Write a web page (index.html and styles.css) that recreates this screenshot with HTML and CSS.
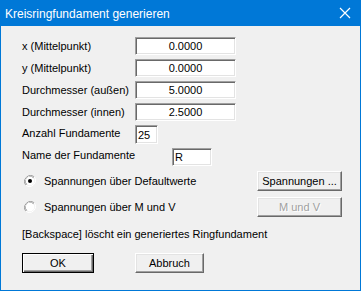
FILE: index.html
```html
<!DOCTYPE html>
<html lang="de">
<head>
    <meta charset="UTF-8">
    <title>Kreisringfundament generieren</title>
    <link rel="stylesheet" href="styles.css">
</head>
<body>
    <div class="window">
        <div class="titlebar">
            <span class="title">Kreisringfundament generieren</span>
            <svg class="close" width="12" height="12" viewBox="0 0 12 12">
                <path d="M1 1 L11 11 M11 1 L1 11" stroke="#fff" stroke-width="1.2" fill="none"/>
            </svg>
        </div>

        <div class="content">
            <div class="row">
                <label class="lbl">x (Mittelpunkt)</label>
                <input class="field num" type="text" value="0.0000" readonly>
            </div>
            <div class="row">
                <label class="lbl">y (Mittelpunkt)</label>
                <input class="field num" type="text" value="0.0000" readonly>
            </div>
            <div class="row">
                <label class="lbl">Durchmesser (außen)</label>
                <input class="field num" type="text" value="5.0000" readonly>
            </div>
            <div class="row">
                <label class="lbl">Durchmesser (innen)</label>
                <input class="field num" type="text" value="2.5000" readonly>
            </div>
            <div class="row row-count">
                <label class="lbl lbl-up">Anzahl Fundamente</label>
                <input class="field small" type="text" value="25" readonly>
            </div>
            <div class="row row-name">
                <label class="lbl lbl-up lbl-wide">Name der Fundamente</label>
                <input class="field name" type="text" value="R" readonly>
            </div>

            <div class="option first">
                <span class="radio">
                    <svg width="12" height="12" viewBox="0 0 12 12">
                        <path d="M10.2 1.8 A6 6 0 0 0 1.8 10.2" stroke="#a0a0a0" fill="none"/>
                        <path d="M9.4 2.6 A4.9 4.9 0 0 0 2.6 9.4" stroke="#696969" fill="none"/>
                        <circle cx="6" cy="6" r="4.4" fill="#fff"/>
                        <path d="M1.8 10.2 A6 6 0 0 0 10.2 1.8" stroke="#fff" fill="none"/>
                        <circle cx="6" cy="6" r="2" fill="#000"/>
                    </svg>
                </span>
                <span class="opt-text">Spannungen über Defaultwerte</span>
                <button class="btn side">Spannungen ...</button>
            </div>
            <div class="option">
                <span class="radio">
                    <svg width="12" height="12" viewBox="0 0 12 12">
                        <path d="M10.2 1.8 A6 6 0 0 0 1.8 10.2" stroke="#a0a0a0" fill="none"/>
                        <path d="M9.4 2.6 A4.9 4.9 0 0 0 2.6 9.4" stroke="#696969" fill="none"/>
                        <circle cx="6" cy="6" r="4.4" fill="#fff"/>
                        <path d="M1.8 10.2 A6 6 0 0 0 10.2 1.8" stroke="#fff" fill="none"/>
                    </svg>
                </span>
                <span class="opt-text">Spannungen über M und V</span>
                <button class="btn side" disabled>M und V</button>
            </div>

            <p class="hint">[Backspace] löscht ein generiertes Ringfundament</p>

            <div class="actions">
                <button class="btn default">OK</button>
                <button class="btn cancel">Abbruch</button>
            </div>
        </div>
    </div>
</body>
</html>
```

FILE: styles.css
```css
body {
    margin: 0;
    background: #fff;
    font-family: "Liberation Sans", Arial, sans-serif;
    font-size: 11px;
    color: #000;
}
.window {
    width: 361px;
    height: 291px;
    box-sizing: border-box;
    border: 1px solid #0078d7;
    border-top: 0;
    background: #f0f0f0;
}
.titlebar {
    height: 26px;
    background: #0078d7;
    display: flex;
    align-items: center;
    justify-content: space-between;
    padding: 0 9px 0 4px;
    color: #fff;
}
.title {
    font-size: 12px;
    padding-top: 1px;
}
.close {
    display: block;
}
.content {
    padding: 11px 18px 0 21px;
}
.row {
    display: flex;
    align-items: center;
    height: 18px;
    margin-bottom: 4px;
}
.row-count {
    margin-top: 2px;
    height: 19px;
}
.row-name {
    margin-bottom: 5px;
}
.lbl {
    width: 113px;
    flex-shrink: 0;
}
.lbl-up {
    position: relative;
    top: -2px;
}
.lbl-wide {
    width: 150px;
}
.field {
    box-sizing: border-box;
    height: 18px;
    margin: 0;
    padding: 0 2px;
    font-family: inherit;
    font-size: 11px;
    color: #000;
    background: #fff;
    border: 1px solid;
    border-color: #a0a0a0 #fff #fff #a0a0a0;
    box-shadow: inset 1px 1px 0 #696969, inset -1px -1px 0 #e3e3e3;
    outline: none;
}
.num {
    width: 101px;
    text-align: center;
}
.small {
    width: 23px;
    height: 19px;
}
.name {
    width: 40px;
}
.option {
    display: flex;
    align-items: center;
    height: 20px;
}
.option.first {
    margin-bottom: 6px;
}
.radio {
    width: 12px;
    height: 12px;
    margin: 0 8px 0 2px;
}
.radio svg {
    display: block;
}
.opt-text {
    flex: 1;
}
.btn {
    box-sizing: border-box;
    height: 20px;
    margin: 0;
    padding: 0;
    font-family: inherit;
    font-size: 11px;
    color: #000;
    background: #f0f0f0;
    border: 1px solid;
    border-color: #fff #696969 #696969 #fff;
    box-shadow: inset -1px -1px 0 #a0a0a0, inset 1px 1px 0 #e3e3e3;
}
.btn:disabled {
    color: #a0a0a0;
    text-shadow: 1px 1px 0 #fff;
}
.side {
    width: 85px;
}
.hint {
    margin: 5px 0 0;
    height: 24px;
    line-height: 24px;
}
.actions {
    display: flex;
    gap: 41px;
    margin-top: 7px;
}
.default {
    width: 72px;
    border: 1px solid #000;
    box-shadow: inset 1px 1px 0 #fff, inset -1px -1px 0 #696969, inset -2px -2px 0 #a0a0a0;
}
.cancel {
    width: 69px;
}
```
